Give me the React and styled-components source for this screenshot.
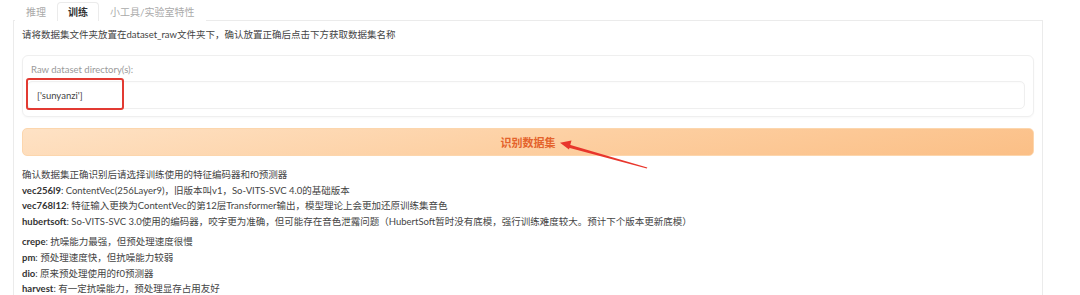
import React from 'react';
import styled, { createGlobalStyle } from 'styled-components';

const GlobalStyle = createGlobalStyle`
  html, body { margin: 0; padding: 0; background: #fff; }
  body {
    font-family: "Lato", "Noto Sans CJK SC", sans-serif;
    color: #444;
    -webkit-font-smoothing: antialiased;
  }
`;

const Page = styled.div`
  position: relative;
  width: 1080px;
  height: 295px;
  overflow: hidden;
  padding-left: 13px;
  box-sizing: border-box;
`;

const TabBar = styled.div`
  display: flex;
  align-items: flex-end;
  height: 20px;
  padding-left: 2px;
  width: 1030px;
`;

const Tab = styled.div`
  position: relative;
  height: 18px;
  line-height: 18px;
  padding: 0 10px;
  font-size: 10px;
  color: ${p => (p.active ? '#333' : '#aaa')};
  font-weight: ${p => (p.active ? 600 : 400)};
  border: 1px solid ${p => (p.active ? '#ebebeb' : 'transparent')};
  border-bottom: none;
  border-radius: 4px 4px 0 0;
  background: #fff;
  margin-bottom: -1px;
  z-index: 1;
`;

const Panel = styled.div`
  width: 1030px;
  box-sizing: border-box;
  height: 300px;
  border: 1px solid #ebebeb;
  border-bottom: none;
  padding: 7px 8px 0 8px;
`;

const Intro = styled.div`
  font-size: 9.5px;
  line-height: 14px;
  color: #444;
`;

const Block = styled.div`
  margin-top: 13px;
  border: 1px solid #efefef;
  border-radius: 6px;
  padding: 8px 8px 7px 4px;
  box-shadow: 0 1px 2px rgba(0, 0, 0, 0.03);
`;

const Label = styled.div`
  font-size: 9.5px;
  line-height: 12px;
  color: #9a9a9a;
  padding-left: 4px;
  margin-bottom: 5px;
`;

const Field = styled.div`
  position: relative;
  height: 28px;
  box-sizing: border-box;
  border: 1px solid #efefef;
  border-radius: 5px;
  padding-left: 9px;
  display: flex;
  align-items: center;
  font-size: 9.5px;
  color: #444;
  box-shadow: inset 0 1px 2px rgba(0, 0, 0, 0.02);
`;

const Highlight = styled.div`
  position: absolute;
  left: -2px;
  top: -4px;
  width: 98px;
  height: 32px;
  box-sizing: border-box;
  border: 2px solid #e23a32;
  border-radius: 3px;
`;

const ActionButton = styled.div`
  margin-top: 11px;
  height: 28px;
  box-sizing: border-box;
  border: 1px solid #fcd6ad;
  border-radius: 5px;
  background: linear-gradient(170deg, #fee2c5 0%, #fdd0a3 50%, #fbbf86 100%);
  display: flex;
  align-items: center;
  justify-content: center;
  font-size: 11px;
  font-weight: 700;
  color: #e4632c;
`;

const Notes = styled.div`
  margin-top: 11px;
  font-size: 9.5px;
  line-height: 15.6px;
  color: #444;
`;

const Group = styled.div`
  margin-top: ${p => p.gap || 0}px;
`;

const Key = styled.b`
  font-weight: 700;
  color: #333;
`;

const Overlay = styled.svg`
  position: absolute;
  left: 0;
  top: 0;
  pointer-events: none;
`;

const encoders = [
  ['vec256l9', ': ContentVec(256Layer9)，旧版本叫v1，So-VITS-SVC 4.0的基础版本'],
  ['vec768l12', ': 特征输入更换为ContentVec的第12层Transformer输出，模型理论上会更加还原训练集音色'],
  ['hubertsoft', ': So-VITS-SVC 3.0使用的编码器，咬字更为准确，但可能存在音色泄露问题（HubertSoft暂时没有底模，强行训练难度较大。预计下个版本更新底模）'],
];

const predictors = [
  ['crepe', ': 抗噪能力最强，但预处理速度很慢'],
  ['pm', ': 预处理速度快，但抗噪能力较弱'],
  ['dio', ': 原来预处理使用的f0预测器'],
  ['harvest', ': 有一定抗噪能力，预处理显存占用友好'],
];

const Arrow = () => (
  <Overlay width="1080" height="295" viewBox="0 0 1080 295">
    {/* tapered shaft + head, tip at left */}
    <polygon points="568,144.2 647.3,167.6 646.8,168.4 567,147.2" fill="#e8362c" />
    <polygon points="560,142.8 571.5,140.6 569,149.6" fill="#e8362c" />
  </Overlay>
);

const App = () => (
  <>
    <GlobalStyle />
    <Page>
      <TabBar>
        <Tab>推理</Tab>
        <Tab active>训练</Tab>
        <Tab>小工具/实验室特性</Tab>
      </TabBar>
      <Panel>
        <Intro>请将数据集文件夹放置在dataset_raw文件夹下，确认放置正确后点击下方获取数据集名称</Intro>
        <Block>
          <Label>Raw dataset directory(s):</Label>
          <Field>
            ['sunyanzi']
            <Highlight />
          </Field>
        </Block>
        <ActionButton>识别数据集</ActionButton>
        <Notes>
          <Group>
            <div>确认数据集正确识别后请选择训练使用的特征编码器和f0预测器</div>
            {encoders.map(([k, v]) => (
              <div key={k}><Key>{k}</Key>{v}</div>
            ))}
          </Group>
          <Group gap={5}>
            {predictors.map(([k, v]) => (
              <div key={k}><Key>{k}</Key>{v}</div>
            ))}
          </Group>
        </Notes>
      </Panel>
      <Arrow />
    </Page>
  </>
);

export default App;
